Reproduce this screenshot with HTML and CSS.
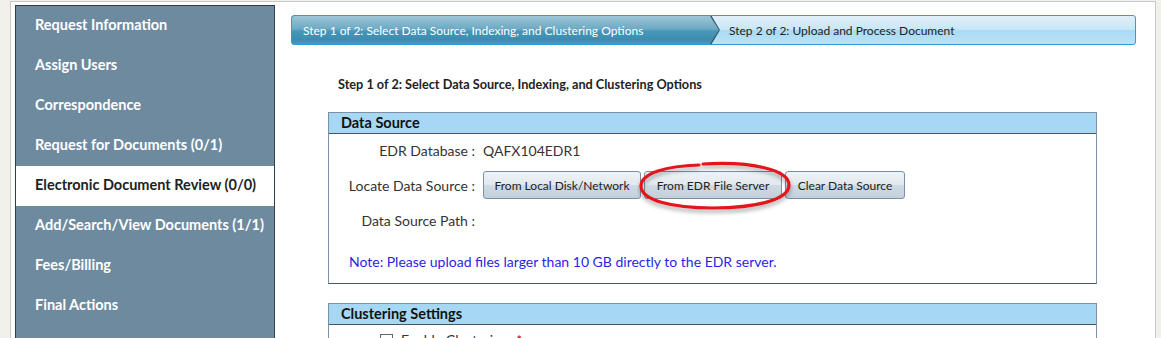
FILE: index.html
```html
<!DOCTYPE html>
<html>
<head>
<meta charset="utf-8">
<link rel="stylesheet" href="styles.css">
</head>
<body>
<div class="frame">
  <nav class="sidebar">
    <div class="nav-item">Request Information</div>
    <div class="nav-item">Assign Users</div>
    <div class="nav-item">Correspondence</div>
    <div class="nav-item">Request for Documents (0/1)</div>
    <div class="nav-item active">Electronic Document Review (0/0)</div>
    <div class="nav-item">Add/Search/View Documents (1/1)</div>
    <div class="nav-item">Fees/Billing</div>
    <div class="nav-item">Final Actions</div>
  </nav>
  <main class="main">
    <div class="steps">
      <div class="step-active"><div class="step-fill">Step 1 of 2: Select Data Source, Indexing, and Clustering Options</div></div>
      <div class="step-next">Step 2 of 2: Upload and Process Document</div>
    </div>
    <h2 class="step-title">Step 1 of 2: Select Data Source, Indexing, and Clustering Options</h2>
    <section class="panel">
      <div class="panel-head">Data Source</div>
      <div class="panel-body">
        <div class="form-grid">
          <div class="lbl">EDR Database :</div>
          <div class="val">QAFX104EDR1</div>
          <div class="lbl">Locate Data Source :</div>
          <div class="val btns">
            <button class="btn b1">From Local Disk/Network</button>
            <span class="circled">
              <button class="btn b2">From EDR File Server</button>
              <svg class="ring" width="160" height="58" viewBox="0 0 160 58">
                <defs>
                  <filter id="sh" x="-10%" y="-20%" width="120%" height="160%">
                    <feDropShadow dx="0" dy="3" stdDeviation="2" flood-color="#000" flood-opacity="0.35"/>
                  </filter>
                </defs>
                <path d="M66 6 C 115 3, 152 12, 152 27 C 152 42, 118 50, 76 50 C 34 50, 4 42, 4 28 C 4 15, 30 8, 62 7" fill="none" stroke="#e3141b" stroke-width="3.2" stroke-linecap="round" filter="url(#sh)"/>
              </svg>
            </span>
            <button class="btn b3">Clear Data Source</button>
          </div>
          <div class="lbl">Data Source Path :</div>
          <div class="val"></div>
        </div>
        <p class="note">Note: Please upload files larger than 10 GB directly to the EDR server.</p>
      </div>
    </section>
    <section class="panel panel2">
      <div class="panel-head">Clustering Settings</div>
      <div class="panel-body2">
        <label class="chk"><span class="box"></span>Enable Clustering <span class="req">*</span></label>
      </div>
    </section>
  </main>
</div>
</body>
</html>
```
FILE: styles.css
```css
html, body { margin: 0; padding: 0; }
body {
  background: #f2f0ea;
  font-family: "Segoe UI", Lato, "Open Sans", sans-serif;
  width: 1161px;
  height: 338px;
  overflow: hidden;
}
.frame {
  margin-left: 10px;
  margin-top: 1px;
  width: 1144px;
  height: 400px;
  background: #fff;
  border-left: 1px solid #c9c9c9;
  border-right: 1px solid #c9c9c9;
  border-top: 1px solid #c9c9c9;
  display: flex;
  align-items: flex-start;
}
.sidebar {
  margin: 3px 0 0 4px;
  width: 258px;
  height: 380px;
  background: #6e8a9f;
  border: 1px solid #2f3d4a;
  display: flex;
  flex-direction: column;
}
.nav-item {
  height: 40px;
  line-height: 37px;
  padding-left: 19px;
  color: #fff;
  font-weight: 700;
  font-size: 14.5px;
  white-space: nowrap;
}
.nav-item.active {
  background: #fff;
  color: #222;
}
.main {
  flex: 1;
  padding: 13px 19px 0 16px;
}
.steps {
  height: 28px;
  display: flex;
  border: 1px solid #2c9fd6;
  border-radius: 3px;
  background: linear-gradient(#e0eff9 0%, #c9e7f7 48%, #a9dbf3 52%, #b8e3f6 100%);
  overflow: hidden;
}
.step-active {
  width: 429px;
  margin: -1px 0 -1px -1px;
  background: #2d5366;
  clip-path: polygon(0 0, calc(100% - 9px) 0, 100% 50%, calc(100% - 9px) 100%, 0 100%);
  display: flex;
  border-radius: 3px 0 0 3px;
}
.step-fill {
  flex: 1;
  margin: 1px;
  border-radius: 2px 0 0 2px;
  background: linear-gradient(#9cc5d7 0%, #6eaac4 45%, #4796b8 55%, #3b8db0 85%, #4c9aba 100%);
  clip-path: polygon(0 0, calc(100% - 9px) 0, 100% 50%, calc(100% - 9px) 100%, 0 100%);
  color: #fff;
  font-size: 12px;
  line-height: 29px;
  padding-left: 11px;
  white-space: nowrap;
}
.step-next {
  color: #222;
  font-size: 12px;
  line-height: 29px;
  padding-left: 9px;
  white-space: nowrap;
}
.step-title {
  margin: 31px 0 0 47px;
  font-size: 12.7px;
  font-weight: 700;
  color: #222;
  line-height: 16px;
}
.panel {
  margin: 20px 0 0 37px;
  width: 767px;
  border: 1px solid #7a91a6;
  border-bottom-color: #44586b;
}
.panel-head {
  height: 20px;
  line-height: 20px;
  background: #a6d8f4;
  border-bottom: 1px solid #44586b;
  font-weight: 700;
  font-size: 14.5px;
  color: #111;
  padding-left: 12px;
}
.panel-body {
  padding: 2px 0 12px 0;
}
.form-grid {
  display: grid;
  grid-template-columns: 146px auto;
  grid-auto-rows: 28px;
  row-gap: 7px;
  column-gap: 8px;
  align-items: center;
}
.lbl {
  text-align: right;
  font-size: 14px;
  color: #333;
}
.val {
  font-size: 14px;
  color: #333;
}
.btns {
  display: flex;
  gap: 3px;
  align-items: center;
}
.btn {
  height: 28px;
  margin: 0;
  padding: 0;
  border: 1px solid #7b90a8;
  border-radius: 3px;
  background: linear-gradient(#eef3f7 0%, #e1e8ee 48%, #cfdae3 52%, #c3d0db 100%);
  font-family: inherit;
  font-size: 12px;
  color: #222;
}
.b1 { width: 158px; }
.b2 { width: 138px; }
.b3 { width: 120px; }
.circled { position: relative; display: flex; }
.ring {
  position: absolute;
  left: -7px;
  top: -13px;
  pointer-events: none;
}
.note {
  margin: 19px 0 0 20px;
  font-size: 14px;
  color: #2a1fe6;
  line-height: 18px;
}
.panel2 { margin-top: 19px; }
.panel-body2 { height: 30px; padding: 7px 0 0 51px; }
.chk { font-size: 14px; color: #333; display: flex; align-items: center; gap: 8px; line-height: 16px; }
.box { width: 11px; height: 11px; border: 1px solid #666; background: #fff; }
.req { color: #d00; }
```
